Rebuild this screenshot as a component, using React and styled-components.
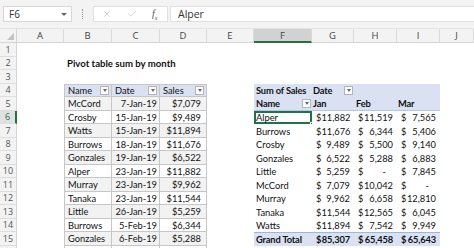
import React from "react";
import styled, { createGlobalStyle } from "styled-components";
import { X, Check } from "lucide-react";

const GlobalStyle = createGlobalStyle`
  html, body { margin: 0; padding: 0; background: #fff; }
  body { font-family: Lato, "Liberation Sans", sans-serif; overflow: hidden; }
`;

const LETTERS = ["A", "B", "C", "D", "E", "F", "G", "H", "I", "J"];
const ROWS = 16;

const DATA = [
  ["McCord", "7-Jan-19", "$7,079"],
  ["Crosby", "15-Jan-19", "$9,489"],
  ["Watts", "15-Jan-19", "$11,894"],
  ["Burrows", "18-Jan-19", "$11,676"],
  ["Gonzales", "19-Jan-19", "$6,522"],
  ["Alper", "23-Jan-19", "$11,882"],
  ["Murray", "23-Jan-19", "$9,962"],
  ["Tanaka", "23-Jan-19", "$11,544"],
  ["Little", "26-Jan-19", "$5,259"],
  ["Burrows", "5-Feb-19", "$6,344"],
  ["Gonzales", "6-Feb-19", "$5,288"],
  ["", "", ""],
];

const PIVOT = [
  ["Alper", "11,882", "11,519", "7,565"],
  ["Burrows", "11,676", "6,344", "5,406"],
  ["Crosby", "9,489", "5,500", "9,140"],
  ["Gonzales", "6,522", "5,288", "6,883"],
  ["Little", "5,259", "-", "7,845"],
  ["McCord", "7,079", "10,042", "-"],
  ["Murray", "9,962", "6,658", "12,810"],
  ["Tanaka", "11,544", "12,565", "6,045"],
  ["Watts", "11,894", "7,542", "9,949"],
];

// formula bar
const TopBar = styled.div`
  height: 29px;
  background: #f3f3f3;
  display: flex;
  align-items: center;
  padding-left: 3px;
  box-sizing: border-box;
  border-bottom: 1px solid #e3e3e3;
`;

const NameBox = styled.div`
  width: 69px;
  height: 16px;
  box-sizing: border-box;
  background: #fff;
  border: 1px solid #d6d6d6;
  display: flex;
  align-items: center;
  justify-content: space-between;
  padding: 0 4px 0 5px;
  font: 10px "Open Sans", sans-serif;
  color: #333;
`;

const Caret = styled.span`
  width: 0;
  height: 0;
  border-left: 3px solid transparent;
  border-right: 3px solid transparent;
  border-top: 3px solid #666;
`;

const Grip = styled.div`
  width: 0;
  height: 10px;
  margin: 0 10px;
  border-left: 1px dotted #9a9a9a;
`;

const FxBox = styled.div`
  width: 75px;
  height: 16px;
  box-sizing: border-box;
  background: #fff;
  border: 1px solid #e0e0e0;
  display: flex;
  align-items: center;
  padding-left: 8px;
  gap: 15px;
  color: #b8b8b8;
`;

const Fx = styled.span`
  font: italic 10px "Liberation Serif", serif;
  color: #555;
  sub { font-size: 6px; }
`;

const FormulaBox = styled.div`
  flex: 1;
  height: 16px;
  margin-left: 2px;
  box-sizing: border-box;
  background: #fff;
  border: 1px solid #e0e0e0;
  border-right: none;
  display: flex;
  align-items: center;
  padding-left: 7px;
  font: 10.5px "Open Sans", sans-serif;
  color: #333;
`;

// sheet
const Sheet = styled.div`
  display: grid;
  grid-template-columns: 17px 47px 48px 48px 47px 47px 58px 42px 43px 43px 1fr;
  grid-template-rows: 14px repeat(${ROWS}, 13.5px);
  height: 219px;
  overflow: hidden;
  font-size: 9.3px;
`;

const Corner = styled.div`
  grid-column: 1;
  grid-row: 1;
  position: relative;
  background: #f3f3f3;
  border-right: 1px solid #d4d4d4;
  border-bottom: 1px solid #d4d4d4;
  &::after {
    content: "";
    position: absolute;
    right: 2px;
    bottom: 2px;
    border-style: solid;
    border-width: 0 0 7px 7px;
    border-color: transparent transparent #c2c2c2 transparent;
  }
`;

const ColHeader = styled.div`
  grid-row: 1;
  grid-column: ${(p) => p.$col};
  display: flex;
  align-items: center;
  justify-content: center;
  box-sizing: border-box;
  font: 9.5px "Open Sans", sans-serif;
  color: #444;
  background: ${(p) => (p.$active ? "#d2d2d2" : "#f3f3f3")};
  border-right: 1px solid #dadada;
  border-bottom: ${(p) => (p.$active ? "2px solid #217346" : "1px solid #d4d4d4")};
`;

const RowHeader = styled.div`
  grid-column: 1;
  grid-row: ${(p) => p.$row};
  display: flex;
  align-items: center;
  justify-content: center;
  box-sizing: border-box;
  font: 9px "Open Sans", sans-serif;
  color: ${(p) => (p.$active ? "#217346" : "#555")};
  background: ${(p) => (p.$active ? "#e1e1e1" : "#f3f3f3")};
  border-bottom: 1px solid #dedede;
  border-right: ${(p) => (p.$active ? "2px solid #217346" : "1px solid #d4d4d4")};
`;

const Title = styled.div`
  grid-column: 3 / span 3;
  grid-row: 3;
  display: flex;
  align-items: center;
  padding: 1px 0 0 3px;
  font-weight: 700;
  font-size: 9.6px;
  color: #111;
  white-space: nowrap;
`;

// source table
const DataTable = styled.div`
  grid-column: 3 / 6;
  grid-row: 5 / ${ROWS + 2};
  display: grid;
  grid-template-columns: 48px 48px 47px;
  grid-auto-rows: 13.5px;
`;

const TCell = styled.div`
  display: flex;
  align-items: center;
  justify-content: ${(p) => (p.$align === "right" ? "flex-end" : "space-between")};
  box-sizing: border-box;
  padding: 1px ${(p) => p.$pr || 2}px 0 3px;
  color: #111;
  white-space: nowrap;
  background: ${(p) => (p.$head ? "#d9e1f2" : p.$band ? "#f2f2f2" : "#fff")};
  border-right: 1px solid #c6c6c6;
  border-bottom: 1px solid #c6c6c6;
  border-top: ${(p) => (p.$head ? "1px solid #c6c6c6" : "none")};
  &:nth-child(3n + 1) { border-left: 1px solid #c6c6c6; }
`;

const DropBtn = styled.span`
  width: 9px;
  height: 9px;
  flex: none;
  box-sizing: border-box;
  background: #fff;
  border: 1px solid #b4b4b4;
  display: inline-flex;
  align-items: center;
  justify-content: center;
  &::after {
    content: "";
    border-left: 2.5px solid transparent;
    border-right: 2.5px solid transparent;
    border-top: 3px solid #666;
  }
`;

// pivot table
const Pivot = styled.div`
  grid-column: 7 / 11;
  grid-row: 5 / 17;
  display: grid;
  grid-template-columns: 58px 42px 43px 43px;
  grid-auto-rows: 13.5px;
`;

const PCell = styled.div`
  position: relative;
  display: flex;
  align-items: center;
  justify-content: space-between;
  box-sizing: border-box;
  padding: 1px ${(p) => (p.$pr != null ? p.$pr : 4)}px 0 ${(p) => (p.$pl != null ? p.$pl : 4)}px;
  font-weight: ${(p) => (p.$bold ? 700 : 400)};
  letter-spacing: ${(p) => (p.$bold ? "-0.15px" : "0")};
  color: #111;
  white-space: nowrap;
  background: ${(p) => (p.$tint ? "#d9e1f2" : "#fff")};
  border-top: ${(p) => (p.$topLine ? "1px solid #9bb7e0" : "none")};
  border-bottom: ${(p) => (p.$bottomLine ? "1px solid #b4c6e7" : "none")};
  ${(p) =>
    p.$selected &&
    `
    box-shadow: inset 0 0 0 2px #217346;
    &::after {
      content: "";
      position: absolute;
      right: -3px;
      bottom: -3px;
      width: 5px;
      height: 5px;
      background: #217346;
      border: 1px solid #fff;
      box-sizing: border-box;
    }
  `}
`;

const Dash = styled.span`
  padding-right: 7px;
`;

const Money = ({ value, bold, total }) => (
  <PCell $bold={bold} $tint={total} $topLine={total} $pl={4} $pr={4}>
    <span>$</span>
    {value === "-" ? <Dash>-</Dash> : <span>{value}</span>}
  </PCell>
);

export default function App() {
  return (
    <>
      <GlobalStyle />
      <TopBar>
        <NameBox>
          <span>F6</span>
          <Caret />
        </NameBox>
        <Grip />
        <FxBox>
          <X size={10} strokeWidth={1.5} />
          <Check size={10} strokeWidth={1.5} />
          <Fx>
            f<sub>x</sub>
          </Fx>
        </FxBox>
        <FormulaBox>Alper</FormulaBox>
      </TopBar>

      <Sheet>
        <Corner />
        {LETTERS.map((l, i) => (
          <ColHeader key={l} $col={i + 2} $active={l === "F"}>
            {l}
          </ColHeader>
        ))}
        {Array.from({ length: ROWS }, (_, i) => (
          <RowHeader key={i} $row={i + 2} $active={i + 1 === 6}>
            {i + 1 < ROWS ? i + 1 : ""}
          </RowHeader>
        ))}

        <Title>Pivot table sum by month</Title>

        <DataTable>
          <TCell $head>
            Name
            <DropBtn />
          </TCell>
          <TCell $head>
            Date
            <DropBtn />
          </TCell>
          <TCell $head>
            Sales
            <DropBtn />
          </TCell>
          {DATA.map((r, i) => (
            <React.Fragment key={i}>
              <TCell $band={i % 2 === 0}>{r[0]}</TCell>
              <TCell $band={i % 2 === 0} $align="right">
                {r[1]}
              </TCell>
              <TCell $band={i % 2 === 0} $align="right" $pr={5}>
                {r[2]}
              </TCell>
            </React.Fragment>
          ))}
        </DataTable>

        <Pivot>
          <PCell $tint $bold $pl={2}>Sum of Sales</PCell>
          <PCell $tint $bold $pl={1} $pr={1}>
            Date
            <DropBtn />
          </PCell>
          <PCell $tint />
          <PCell $tint />

          <PCell $tint $bold $pl={2} $pr={1} $bottomLine>
            Name
            <DropBtn />
          </PCell>
          <PCell $tint $bold $pl={1} $bottomLine>Jan</PCell>
          <PCell $tint $bold $pl={2} $bottomLine>Feb</PCell>
          <PCell $tint $bold $pl={1} $bottomLine>Mar</PCell>

          {PIVOT.map((r, i) => (
            <React.Fragment key={r[0]}>
              <PCell $pl={2} $selected={i === 0}>
                {r[0]}
              </PCell>
              <Money value={r[1]} />
              <Money value={r[2]} />
              <Money value={r[3]} />
            </React.Fragment>
          ))}

          <PCell $tint $topLine $bold $pl={2}>Grand Total</PCell>
          <Money value="85,307" bold total />
          <Money value="65,458" bold total />
          <Money value="65,643" bold total />
        </Pivot>
      </Sheet>
    </>
  );
}
